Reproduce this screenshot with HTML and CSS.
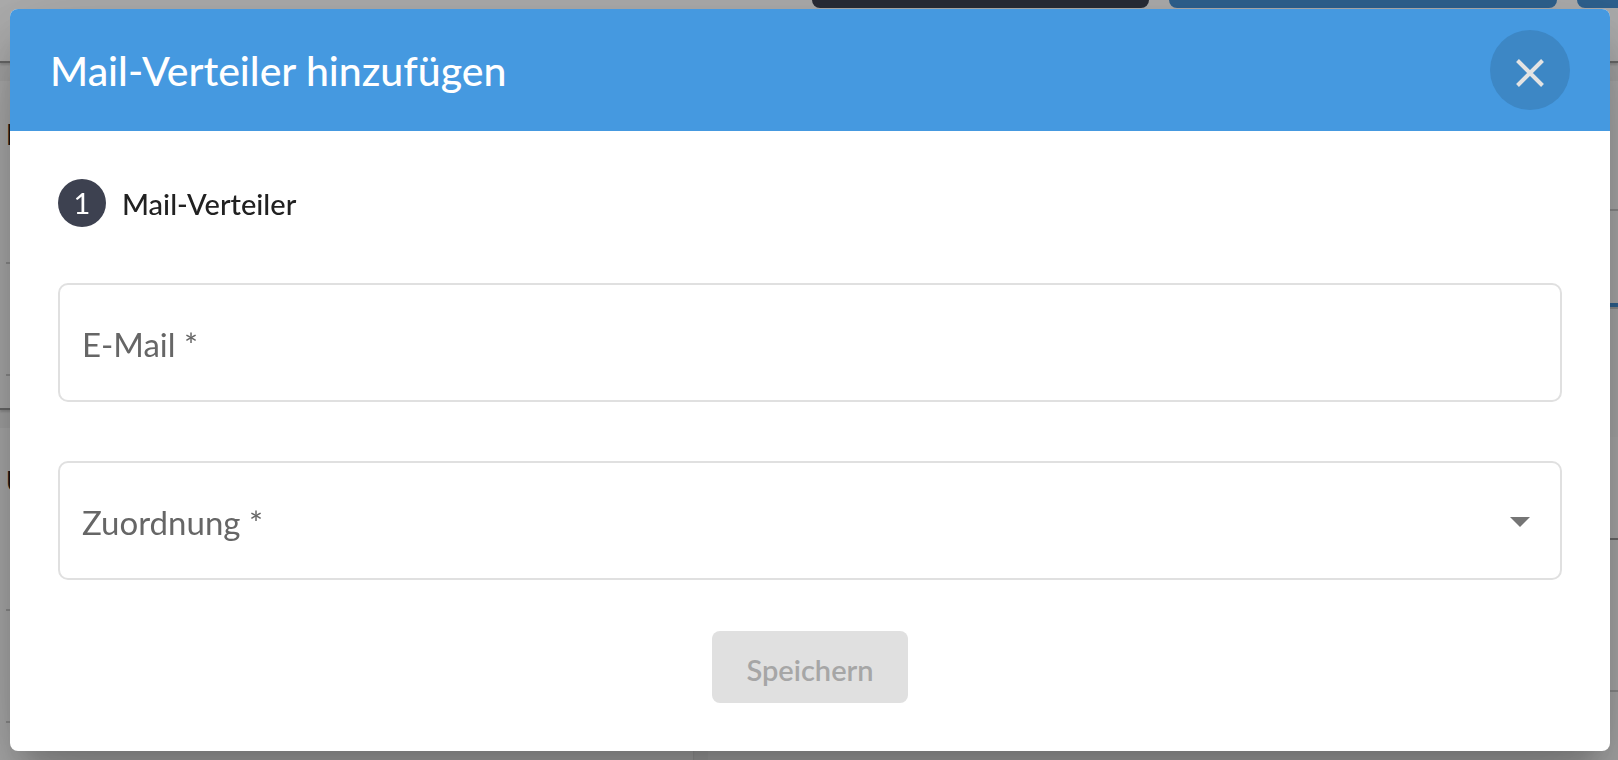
FILE: index.html
```html
<!DOCTYPE html>
<html lang="de">
<head>
    <meta charset="UTF-8">
    <meta name="viewport" content="width=device-width, initial-scale=1.0">
    <title>Mail-Verteiler hinzufügen</title>
    <link rel="stylesheet" href="styles.css">
</head>
<body>

<!-- Page behind the dialog -->
<div class="page" aria-hidden="true">
    <div class="toolbar">
        <div class="toolbar-button dark"></div>
        <div class="toolbar-button wide"></div>
        <div class="toolbar-button last"></div>
    </div>
    <div class="columns">
        <div class="column">
            <div class="panel">
                <div class="panel-heading">N</div>
                <div class="panel-row"></div>
            </div>
            <div class="panel">
                <div class="panel-heading">U</div>
                <div class="panel-row"></div>
                <div class="panel-row"></div>
            </div>
        </div>
        <div class="column details">
            <div class="details-title"></div>
            <div class="details-tabs"></div>
            <div class="details-filter"></div>
            <div class="details-list"></div>
        </div>
    </div>
</div>

<div class="overlay">
    <div class="dialog" role="dialog" aria-modal="true" aria-labelledby="dialog-title">
        <div class="dialog-header">
            <h1 id="dialog-title">Mail-Verteiler hinzufügen</h1>
            <button class="close-button" type="button" aria-label="Schließen">
                <svg width="28" height="28" viewBox="0 0 28 28">
                    <path d="M1.5 1.5L26.5 26.5M26.5 1.5L1.5 26.5" fill="none" stroke="#e3e3e3" stroke-width="4" />
                </svg>
            </button>
        </div>

        <form class="dialog-content">
            <div class="step">
                <span class="step-number">1</span>
                <h2>Mail-Verteiler</h2>
            </div>

            <div class="field">
                <label for="email">E-Mail *</label>
                <input type="email" id="email" required>
            </div>

            <div class="field">
                <label for="zuordnung">Zuordnung *</label>
                <select id="zuordnung" required>
                    <option value=""></option>
                </select>
                <svg class="arrow" width="20" height="10" viewBox="0 0 20 10">
                    <path d="M0 0H20L10 10Z" fill="#757575" />
                </svg>
            </div>

            <button class="save-button" type="submit" disabled>Speichern</button>
        </form>
    </div>
</div>

</body>
</html>
```
FILE: styles.css
```css
* {
    box-sizing: border-box;
}

body {
    font-family: Lato, "Open Sans", sans-serif;
    height: 100vh;
    margin: 0;
    overflow: hidden;
    background: #f0f0f0;
}

/* Page behind the dialog */
.page {
    height: 100vh;
    overflow: hidden;
}

.toolbar {
    display: flex;
    justify-content: flex-end;
    align-items: flex-start;
    gap: 20px;
    height: 63px;
    background: #fff;
    border-bottom: 2px solid #999;
    box-shadow: 0 2px 2px #ccc;
}

.toolbar-button {
    height: 8px;
    border-radius: 0 0 8px 8px;
    background: #438fd3;
}

.toolbar-button.dark {
    width: 337px;
    background: #3c4150;
}

.toolbar-button.wide {
    width: 388px;
}

.toolbar-button.last {
    width: 41px;
    border-radius: 0 0 0 8px;
}

.columns {
    display: grid;
    grid-template-columns: 16fr 21fr;
    gap: 15px;
    padding-top: 18px;
}

.panel {
    margin-bottom: 18px;
    padding: 0 6px 32px;
    background: #fafafa;
    border-bottom: 2px solid #999;
    box-shadow: 0 2px 2px #ccc;
}

.panel-heading {
    height: 183px;
    padding-top: 35px;
    font-size: 29px;
    font-weight: bold;
    color: #222;
    border-bottom: 2px solid #ccc;
}

.panel-row {
    height: 112px;
    border-bottom: 2px solid #ccc;
}

.details {
    background: #f6f6f6;
}

.details-title {
    height: 130px;
    background: #fafafa;
    border-bottom: 2px solid #ccc;
}

.details-tabs {
    height: 98px;
    background: #fafafa;
    border-bottom: 2px solid #ccc;
    box-shadow: inset 0 -4px #438fd3;
}

.details-filter {
    height: 103px;
    margin: 128px 0 40px;
    background: #fafafa;
    border-bottom: 2px solid #999;
}

.details-list {
    height: 112px;
    background: #fafafa;
    border-bottom: 2px solid #ccc;
}

/* Dialog */
.overlay {
    position: fixed;
    inset: 0;
    padding: 9px 8px 9px 10px;
    background: rgba(0, 0, 0, 0.32);
}

.dialog {
    overflow: hidden;
    background: #fff;
    border-radius: 8px;
    box-shadow: 0 22px 30px -14px rgba(0, 0, 0, 0.2),
        0 48px 76px 6px rgba(0, 0, 0, 0.14),
        0 18px 92px 16px rgba(0, 0, 0, 0.12);
}

.dialog-header {
    display: flex;
    justify-content: space-between;
    align-items: center;
    height: 122px;
    padding: 0 40px;
    background: #4599e0;
    color: #fff;
}

h1 {
    margin: 0;
    font-size: 41px;
    font-weight: 500;
}

.close-button {
    display: flex;
    justify-content: center;
    align-items: center;
    width: 80px;
    height: 80px;
    padding: 6px 0 0;
    border: none;
    border-radius: 50%;
    background: #3d87c5;
    cursor: pointer;
}

.dialog-content {
    display: flex;
    flex-direction: column;
    padding: 48px;
}

.step {
    display: flex;
    align-items: center;
    gap: 16px;
    margin-bottom: 56px;
}

.step-number {
    width: 48px;
    border-radius: 50%;
    background: #3d4150;
    color: #fff;
    font-size: 29px;
    line-height: 48px;
    text-align: center;
}

h2 {
    margin: 0;
    font-size: 29px;
    font-weight: 500;
    color: #212121;
}

/* Label and arrow share the cell of the control */
.field {
    display: grid;
    align-items: center;
    height: 119px;
    margin-bottom: 59px;
}

.field > * {
    grid-area: 1 / 1;
}

.field label {
    z-index: 1;
    justify-self: start;
    margin-left: 24px;
    padding-top: 2px;
    color: #666;
    font-size: 33px;
    line-height: 40px;
    pointer-events: none;
}

.field input,
.field select {
    width: 100%;
    height: 100%;
    padding: 0 24px;
    border: 2px solid #e0e0e0;
    border-radius: 10px;
    background: #fff;
    font-family: inherit;
    font-size: 33px;
    appearance: none;
}

.arrow {
    z-index: 1;
    justify-self: end;
    margin: 2px 32px 0 0;
    pointer-events: none;
}

.save-button {
    align-self: center;
    height: 72px;
    margin-top: -8px;
    padding: 4px 34px 0;
    border: none;
    border-radius: 8px;
    background: #e0e0e0;
    color: #a6a6a6;
    font-family: inherit;
    font-size: 29px;
    font-weight: 600;
}
```
